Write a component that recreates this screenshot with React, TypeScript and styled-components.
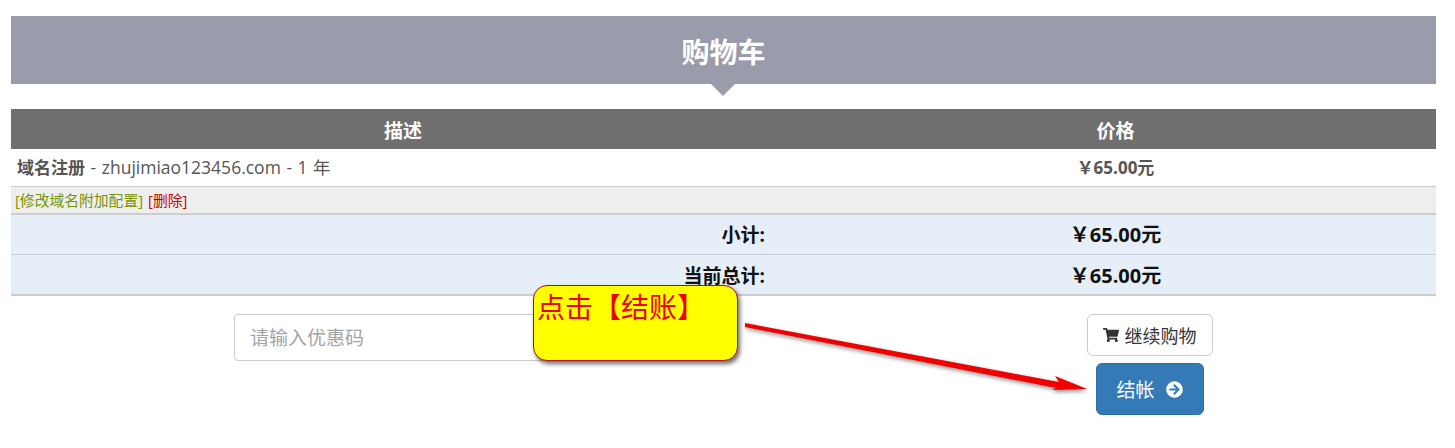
import styled, { createGlobalStyle } from "styled-components";
import { FaArrowCircleRight, FaShoppingCart } from "react-icons/fa";

const GlobalStyle = createGlobalStyle`
  html, body {
    margin: 0;
    padding: 0;
    background: #fff;
  }
  body {
    font-family: "Open Sans", "Noto Sans CJK SC", sans-serif;
    color: #333;
  }
`;

const Page = styled.div`
  position: relative;
  width: 1425px;
  height: 432px;
  padding: 16px 19px 0 11px;
`;
const Header = styled.h1`
  position: relative;
  box-sizing: border-box;
  height: 68px;
  margin: 0 0 25px;
  background: #9a9bab;
  color: #fff;
  font-size: 28px;
  font-weight: 700;
  line-height: 72px;
  text-align: center;
  &::after {
    content: "";
    position: absolute;
    left: 700px;
    top: 68px;
    border-left: 12px solid transparent;
    border-right: 12px solid transparent;
    border-top: 12px solid #9a9bab;
  }
`;
const Row = styled.div`
  display: grid;
  grid-template-columns: 784px 641px;
  align-items: center;
`;
const HeadRow = styled(Row)`
  box-sizing: border-box;
  height: 40px;
  padding-top: 2px;
  background: #6f6f6f;
  color: #fff;
  font-size: 19px;
  font-weight: 700;
  text-align: center;
`;
const ItemRow = styled(Row)`
  height: 37px;
  font-size: 17.5px;
  line-height: 34px;
  color: #555;
  border-bottom: 1px solid #ccc;
  box-sizing: content-box;
`;
const ItemName = styled.div`
  padding-left: 6px;
  word-spacing: 1px;
  strong {
    font-size: 17px;
  }
`;
const ItemPrice = styled.div`
  text-align: center;
  font-size: 17px;
  font-weight: 700;
`;
const ActionRow = styled.div`
  box-sizing: border-box;
  height: 28px;
  padding: 3px 4px 0;
  background: #eee;
  border-bottom: 2px solid #ccc;
  font-size: 14.8px;
  line-height: 20px;
`;
const ActionLink = styled.a<{ $danger?: boolean }>`
  margin-right: 5px;
  color: ${(p) => (p.$danger ? "#cc0000" : "#779500")};
`;
const SummaryRow = styled(Row)<{ $last?: boolean }>`
  box-sizing: border-box;
  height: ${(p) => (p.$last ? "41px" : "40px")};
  padding-top: ${(p) => (p.$last ? "2px" : "0")};
  background: #e6eff8;
  border-bottom: ${(p) => (p.$last ? "2px solid #ccc" : "1px solid #c5ccd4")};
  color: #111;
  font-size: 20px;
  line-height: 36px;
  font-weight: 700;
`;
const SummaryLabel = styled.div`
  padding-right: 30px;
  font-size: 19px;
  text-align: right;
`;
const SummaryValue = styled.div`
  text-align: center;
`;
const Footer = styled(Row)`
  align-items: start;
  margin-top: 18px;
`;
const CouponCell = styled.div`
  padding-left: 223px;
`;
const CouponInput = styled.input`
  box-sizing: border-box;
  display: block;
  width: 338px;
  height: 47px;
  padding: 0 15px;
  border: 1px solid #ccc;
  border-radius: 4px;
  font-family: inherit;
  font-size: 19px;
  &::placeholder {
    color: #a3a3a3;
    opacity: 1;
  }
`;
const ButtonCell = styled.div`
  display: flex;
  flex-direction: column;
  align-items: center;
  gap: 7px;
  padding-left: 68px;
`;
const ContinueButton = styled.button`
  box-sizing: border-box;
  display: flex;
  align-items: center;
  justify-content: center;
  gap: 6px;
  width: 126px;
  height: 42px;
  padding: 0;
  background: #fff;
  border: 1px solid #ccc;
  border-radius: 6px;
  color: #333;
  font-family: inherit;
  font-size: 18px;
`;
const CheckoutButton = styled.button`
  box-sizing: border-box;
  display: flex;
  align-items: center;
  justify-content: center;
  gap: 11px;
  width: 108px;
  height: 52px;
  padding: 0;
  background: #337ab7;
  border: 1px solid #2e6da4;
  border-radius: 6px;
  color: #fff;
  font-family: inherit;
  font-size: 19px;
`;
const Note = styled.div`
  position: absolute;
  left: 533px;
  top: 285px;
  box-sizing: border-box;
  width: 205px;
  height: 76px;
  padding: 0 3px;
  background: #ffff00;
  border: 1px solid #b01010;
  border-radius: 14px;
  box-shadow: 2px 3px 4px rgba(60, 60, 60, 0.75);
  color: #ee0000;
  font-size: 28px;
  line-height: 42px;
`;
const Arrow = styled.svg`
  position: absolute;
  left: 740px;
  top: 315px;
  filter: drop-shadow(1px 2px 2px rgba(60, 60, 60, 0.6));
`;

export default function App() {
  return (
    <Page>
      <GlobalStyle />
      <Header>购物车</Header>
      <HeadRow>
        <div>描述</div>
        <div>价格</div>
      </HeadRow>
      <ItemRow>
        <ItemName>
          <strong>域名注册</strong> - zhujimiao123456.com - 1 年
        </ItemName>
        <ItemPrice>￥65.00元</ItemPrice>
      </ItemRow>
      <ActionRow>
        <ActionLink>[修改域名附加配置]</ActionLink>
        <ActionLink $danger>[删除]</ActionLink>
      </ActionRow>
      <SummaryRow>
        <SummaryLabel>小计:</SummaryLabel>
        <SummaryValue>￥65.00元</SummaryValue>
      </SummaryRow>
      <SummaryRow $last>
        <SummaryLabel>当前总计:</SummaryLabel>
        <SummaryValue>￥65.00元</SummaryValue>
      </SummaryRow>
      <Footer>
        <CouponCell>
          <CouponInput placeholder="请输入优惠码" />
        </CouponCell>
        <ButtonCell>
          <ContinueButton>
            <FaShoppingCart size={16} />
            继续购物
          </ContinueButton>
          <CheckoutButton>
            结帐
            <FaArrowCircleRight size={17} />
          </CheckoutButton>
        </ButtonCell>
      </Footer>
      <Note>点击【结账】</Note>
      <Arrow width="350" height="85" viewBox="0 0 350 85">
        <path d="M5 8 L319 67 L315 61 L347 74 L312 75 L316 73 L5 12 Z" fill="#f00000" />
      </Arrow>
    </Page>
  );
}
